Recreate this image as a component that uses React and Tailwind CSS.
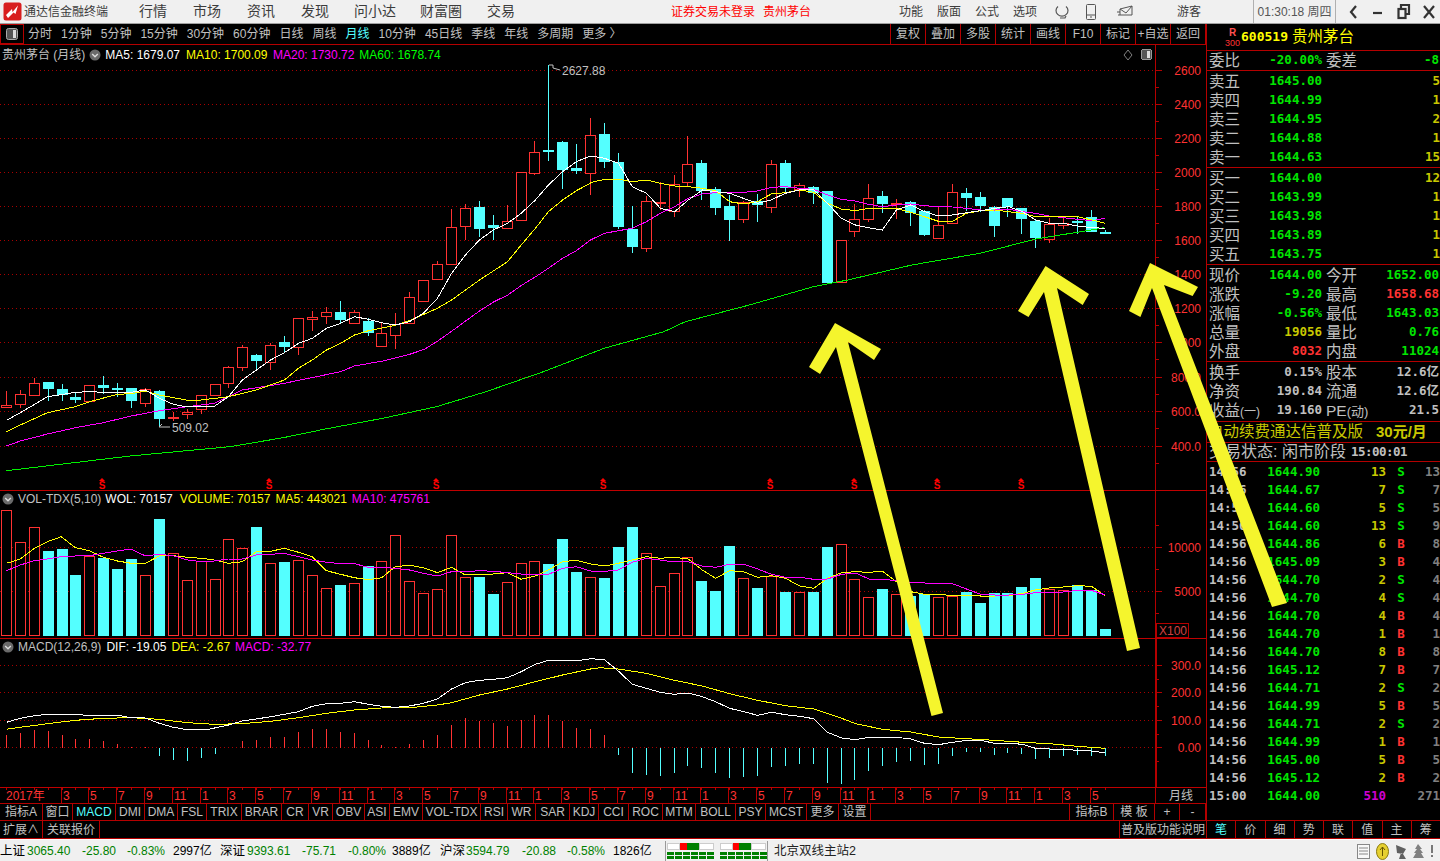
import React from "react";

const RED = "#ff3232", CY = "#54ffff", GRID = "#a80000", AX = "#b40000";
const cx = (i) => Math.round(5.9 + 13.91 * i);
const ry7 = (z) => 60 + z / 3;
const ry9 = (z) => 485 + z / 3;
const x7 = (z) => z / 2.613;
const x8 = (z) => 540 + z / 2.34;
const x10 = (z) => 600 + z / 2.57;

const C = [
  ["r",992,1036,1042,1042],["r",990,1003,1033,1045],["r",953,970,1004,1004],["c",966,966,986,1022],["c",972,988,1006,1022],
  ["c",995,1011,1019,1028],["r",976,976,1022,1022],["c",948,975,984,1002],["c",968,984,987,1010],["c",984,984,1022,1044],
  ["r",984,986,1028,1040],["c",990,993,1076,1100],["f",1055,1070,1076,1084],["r",1048,1056,1061,1076],["r",1006,1006,1048,1062],
  ["r",972,973,1004,1006],["r",918,922,970,984],["r",855,862,920,932],["c",882,885,902,926],["r",850,856,905,930],
  ["c",828,846,860,880],["r",775,775,860,885],["r",753,772,778,812],["r",742,757,769,792],["c",723,756,780,792],
  ["r",750,755,788,788],["c",775,783,818,828],["r",790,820,857,858],["r",760,792,824,866],["r",696,712,790,792],
  ["r",660,661,722,722],["r",603,613,656,656],["r",447,502,611,611],["r",432,445,497,540],["c",423,441,506,530],
  ["c",465,495,503,540],["r",435,484,503,503],["r",337,337,479,479],["r",243,277,338,344],["c",14,270,272,303],
  ["c",244,246,330,387],["c",252,323,333,342],["r",174,226,338,405],["c",189,222,306,323],["c",280,306,500,507],
  ["c",438,507,560,578],["r",408,424,563,575],["r",365,426,429,450],["r",345,373,453,470],["r",228,313,365,378],
  ["c",300,310,392,420],["c",382,388,443,465],["c",405,438,480,542],["r",423,425,476,488],["c",402,423,435,485],
  ["r",300,313,440,458],["c",300,310,385,400],["r",368,376,388,412],["c",378,381,400,432],["c",393,393,668,672],
  ["r",541,541,665,665],["r",432,478,512,530],["r",372,415,476,485],["c",393,409,432,458],["f",418,430,436,476],
  ["c",424,427,459,498],["c",451,453,525,528],["r",440,496,533,533],["r",372,397,490,492],["c",385,400,414,452],
  ["c",396,411,438,457],["c",438,441,497,530],["c",414,414,442,470],["c",444,445,476,522],["c",478,484,535,564],
  ["r",473,493,538,548],["r",472,488,496,506],["c",472,483,486,521],["c",451,472,516,516],["c",510,516,518,522],
];

const p7 = (a) => a.map(([x, y]) => [x7(x), ry7(y)]);
const p8 = (a) => a.map(([x, y]) => [x8(x), ry7(y)]);
const p9 = (a) => a.map(([x, y]) => [x7(x), ry9(y)]);
const p10 = (a) => a.map(([x, y]) => [x10(x), ry9(y)]);
const pts = (a) => a.map(([x, y]) => `${x.toFixed(1)},${y.toFixed(1)}`).join(" ");

const MA5 = [...p7([[17,1081],[53,1058],[124,1010],[160,1004],[197,997],[234,995],[270,997],[343,997],[380,990],[416,1015],[453,1033],[490,1041],[560,1039],[597,1010],[633,960],[670,930],[707,900],[743,878],[780,850],[816,835],[853,805],[890,790],[926,770],[963,778],[997,788],[1033,795],[1070,785],[1106,760],[1143,715],[1180,640],[1216,585],[1253,540],[1289,510],[1326,490],[1362,460],[1399,420],[1433,375],[1470,335],[1506,305],[1543,288]]),
  ...p8([[118,288],[151,295],[184,310],[216,380],[249,400],[282,445],[315,455],[347,420],[380,390],[411,395],[444,400],[476,415],[509,430],[541,420],[574,400],[607,390],[640,388],[673,430],[705,475],[738,495],[769,503],[801,510],[834,450],[867,435],[900,455],[932,468],[965,465],[998,458],[1031,452],[1064,445],[1097,440],[1129,455],[1160,480],[1192,490],[1225,490],[1258,498],[1291,503],[1323,505]])];
const MA10 = [...p7([[17,1115],[53,1095],[124,1058],[197,1040],[234,1025],[307,1003],[343,1001],[380,993],[416,1005],[490,1021],[526,1020],[597,1010],[670,990],[743,960],[780,925],[816,900],[853,870],[890,850],[926,825],[963,812],[1033,796],[1070,782],[1143,745],[1180,720],[1253,660],[1326,605],[1362,555],[1399,505],[1433,455],[1470,420],[1506,392],[1543,370]]),
  ...p8([[118,368],[151,358],[184,358],[216,365],[249,360],[282,370],[315,378],[347,380],[380,385],[411,392],[444,425],[476,432],[509,425],[541,402],[574,398],[607,390],[640,397],[673,430],[705,447],[738,452],[769,445],[801,445],[834,445],[867,457],[900,470],[932,484],[965,484],[998,460],[1031,452],[1064,450],[1097,455],[1129,460],[1160,470],[1192,470],[1225,470],[1258,470],[1291,480],[1323,490]])];
const MA20 = [...p7([[17,1158],[53,1143],[124,1122],[197,1103],[270,1088],[343,1068],[416,1052],[490,1040],[560,1030],[633,990],[743,970],[890,935],[926,918],[1000,903],[1036,893],[1073,882],[1109,868],[1145,842],[1182,812],[1218,782],[1254,752],[1291,725],[1327,705],[1364,675],[1400,650],[1433,625],[1470,595],[1506,572]]),
  ...p8([[118,540],[151,520],[184,512],[216,505],[249,485],[282,460],[315,440],[347,415],[380,402],[411,398],[444,397],[476,397],[509,393],[541,382],[574,380],[607,385],[640,388],[673,405],[705,418],[738,423],[769,433],[801,440],[834,435],[867,432],[900,437],[932,440],[965,441],[998,445],[1031,450],[1064,450],[1097,448],[1129,455],[1160,460],[1192,468],[1225,473],[1258,478],[1291,482],[1323,475]])];
const MA60 = [...p7([[17,1232],[340,1188],[600,1160],[740,1133],[850,1107],[1000,1075],[1140,1040],[1270,995],[1420,935]]),
  ...p8([[140,870],[150,865],[290,815],[340,785],[490,735],[640,680],[720,660],[870,615],[1030,580],[1160,537],[1290,510],[1320,503]])];

const V = ["r76","r172","r127","c198","c192","c270","r213","c219","c252","c222","r271","c102","r205","r286","r229","r283","r163","r189","c126","r235","c231","r226","r271","r310","c300","r295","c244","r229","r151","r289","r325","r313","r151","r277","c276","c327","r292","r235","r229","c237","c162","c261","r277",
  "c279","c186","c126","r205","r304","r265","r217","c288","c318","c183","r280","c309","r272","c321","r322","c321","c186","r178","r283","r337","c312","r328","c333","c327","r337","r334","c321","c354","c324","c324","c306","c279","r312","r316","c300","c316","c432"];

const VY = [...p9([[17,235],[53,222],[90,190],[124,170],[160,155],[197,188],[234,197],[270,217],[307,228],[343,235],[380,235],[416,213],[453,212],[490,217],[526,220],[560,225],[597,235],[633,230],[670,200],[707,199],[743,190],[780,202],[816,215],[853,257],[890,268],[926,278],[963,284],[997,278],[1033,245],[1070,241],[1106,248],[1143,263],[1180,247],[1216,270],[1253,268],[1289,267],[1326,263],[1362,283],[1399,273],[1433,255],[1470,230],[1506,226],[1543,237]]),
  ...p10([[12,243],[47,235],[83,225],[119,215],[155,220],[191,217],[227,222],[263,255],[297,280],[333,257],[369,260],[405,277],[441,272],[477,280],[513,303],[549,310],[585,280],[621,263],[657,260],[691,262],[726,259],[762,290],[799,320],[834,328],[870,328],[906,332],[942,331],[978,333],[1014,333],[1050,332],[1086,325],[1119,315],[1155,309],[1191,306],[1227,302],[1263,304],[1297,331]])];
const VM = [...p9([[17,257],[53,240],[90,227],[124,222],[160,215],[197,213],[234,212],[270,205],[307,198],[343,192],[380,213],[416,208],[453,212],[490,225],[526,230],[560,228],[597,222],[633,222],[670,210],[707,208],[743,205],[780,215],[816,225],[853,232],[890,236],[926,236],[963,247],[997,247],[1033,250],[1070,255],[1106,265],[1143,273],[1180,260],[1216,260],[1253,257],[1289,259],[1326,263],[1362,267],[1399,270],[1433,268],[1470,250],[1506,245],[1543,258]]),
  ...p10([[12,259],[47,255],[83,232],[119,220],[155,225],[191,231],[227,230],[263,243],[297,247],[333,238],[369,238],[405,252],[441,268],[477,277],[513,277],[549,283],[585,282],[621,268],[657,264],[691,282],[726,283],[762,287],[799,293],[834,294],[870,296],[906,296],[942,312],[978,328],[1014,330],[1050,330],[1086,328],[1119,323],[1155,322],[1191,321],[1227,316],[1263,316],[1297,329]])];

const DIF = [...p9([[17,712],[53,700],[90,692],[124,688],[180,688],[234,691],[307,691],[343,698],[380,699],[416,715],[453,727],[490,734],[540,734],[597,720],[633,708],[670,702],[707,695],[743,688],[780,680],[816,664],[853,656],[890,655],[926,650],[963,658],[997,664],[1033,667],[1070,663],[1106,655],[1143,642],[1180,612],[1216,593],[1253,586],[1289,583],[1326,578],[1362,560],[1399,538],[1433,526],[1470,526],[1506,528],[1543,521]]),
  ...p10([[0,523],[12,525],[47,558],[83,598],[119,610],[155,622],[191,628],[227,624],[263,635],[297,650],[333,670],[369,680],[405,691],[441,682],[477,689],[513,694],[549,701],[585,742],[621,759],[657,764],[691,757],[726,757],[762,757],[799,762],[834,775],[870,779],[906,772],[942,766],[978,766],[1014,775],[1050,775],[1086,778],[1119,790],[1155,792],[1191,793],[1227,796],[1263,798],[1297,803]])];
const DEA = [...p9([[17,733],[53,727],[124,716],[197,706],[270,700],[343,698],[416,703],[490,713],[560,718],[633,716],[707,709],[780,698],[853,685],[926,675],[997,669],[1070,668],[1143,660],[1180,653],[1253,630],[1326,612],[1399,590],[1470,570],[1543,552]]),
  ...p10([[0,548],[47,552],[119,565],[191,586],[263,603],[333,626],[405,646],[477,662],[549,672],[621,700],[657,716],[726,733],[799,741],[870,756],[942,761],[1014,766],[1086,772],[1155,776],[1227,784],[1297,790]])];
const H = [750,745,736,739,751,763,763,769,778,785,786,812,824,828,818,806,790,768,765,757,756,742,733,733,742,745,766,781,785,778,766,751,720,700,707,714,724,706,690,690,708,730,733,750,
  810,864,870,873,864,843,849,864,879,876,873,846,843,837,837,894,897,885,858,843,831,828,840,837,813,801,801,810,804,807,822,819,813,810,813,813];

const Grid = ({ y }) => <line x1="0" x2="1155" y1={y + 0.5} y2={y + 0.5} stroke={GRID} strokeDasharray="1 3" />;
const Line = ({ p, c }) => <polyline points={pts(p)} fill="none" stroke={c} strokeWidth="1" />;
const T = ({ x, y, c = RED, a = "end", s = 12, children, ...r }) => (
  <text x={x} y={y} fill={c} textAnchor={a} fontSize={s} fontFamily="'Liberation Sans','Noto Sans CJK SC',sans-serif" {...r}>{children}</text>
);
const AxisTick = ({ y, major }) => <line x1="1156" x2={major ? 1162 : 1159} y1={y + 0.5} y2={y + 0.5} stroke={AX} />;

function PriceChart() {
  const gy = [31,133,235,337,439,541,643,745,847,951,1054,1157].map((z) => Math.round(ry7(z)));
  const labels = ["2600","2400","2200","2000","1800","1600","1400","1200","1000","800.0","600.0","400.0"];
  const ss = [102, 269, 436, 603, 770, 854, 937, 1021];
  return (
    <svg viewBox="0 45 1206 445" className="block w-full h-full" shapeRendering="crispEdges">
      {gy.map((y) => <Grid key={y} y={y} />)}
      {gy.map((y, i) => (
        <g key={i}>
          <AxisTick y={y} major />
          <AxisTick y={y + 17} />
          <T x="1201" y={y + 5}>{labels[i]}</T>
        </g>
      ))}
      <line x1="1155.5" x2="1155.5" y1="45" y2="490" stroke={AX} />
      {C.map(([k, wt, bt, bb, wb], i) => {
        const x = cx(i);
        const col = k === "c" ? CY : RED;
        const [a, b, c, d] = [wt, bt, bb, wb].map((z) => Math.round(ry7(z)));
        return (
          <g key={i}>
            <line x1={x + 0.5} x2={x + 0.5} y1={a} y2={d} stroke={col} />
            {k === "r" ? (
              <rect x={x - 5 + 0.5} y={b + 0.5} width="10" height={Math.max(c - b, 1)} fill="#000" stroke={col} />
            ) : (
              <rect x={x - 5} y={b} width="11" height={Math.max(c - b, 2)} fill={col} />
            )}
          </g>
        );
      })}
      <Line p={MA60} c="#00f000" />
      <Line p={MA20} c="#ff00ff" />
      <Line p={MA10} c="#ffff00" />
      <Line p={MA5} c="#ffffff" />
      {ss.map((x) => (
        <g key={x} shapeRendering="auto">
          <polygon points={`${x},478 ${x - 3},481 ${x + 3},481`} fill="#ff0000" />
          <T x={x} y="488.5" a="middle" s="10" c="#ff0000" fontWeight="700">S</T>
        </g>
      ))}
      <g shapeRendering="auto">
        <polyline points="549,65 553,65 553,68 560,70" fill="none" stroke="#c0c0c0" />
        <T x="562" y="75" a="start" c="#c0c0c0">2627.88</T>
        <polyline points="170,427 159,427 162,424 M159,427" fill="none" stroke="#c0c0c0" />
        <T x="172" y="432" a="start" c="#c0c0c0">509.02</T>
        <polygon points="1128,50 1132,55 1128,60 1124,55" fill="none" stroke="#808080" />
      </g>
      <rect x="1141.5" y="49.5" width="10" height="10" rx="2" fill="#555" stroke="#999" />
      <rect x="1147" y="51" width="3" height="7" fill="#ddd" />
    </svg>
  );
}

function VolChart() {
  return (
    <svg viewBox="0 491 1206 147" className="block w-full h-full" shapeRendering="crispEdges">
      <Grid y={547} />
      <Grid y={591} />
      <line x1="1155.5" x2="1155.5" y1="491" y2="638" stroke={AX} />
      {[547, 591].map((y) => <AxisTick key={y} y={y} major />)}
      {[525, 569, 613].map((y) => <AxisTick key={y} y={y} />)}
      <T x="1201" y="552">10000</T>
      <T x="1201" y="596">5000</T>
      <rect x="1156.5" y="623.5" width="32" height="14" fill="none" stroke={AX} />
      <T x="1159" y="635" a="start" c="#d04040">X100</T>
      {V.map((v, i) => {
        const k = v[0];
        const top = Math.round(ry9(+v.slice(1)));
        const x = cx(i);
        return k === "c" ? (
          <rect key={i} x={x - 5} y={top} width="11" height={636 - top} fill={CY} />
        ) : (
          <rect key={i} x={x - 5 + 0.5} y={top + 0.5} width="10" height={636 - top - 1} fill="#000" stroke={RED} />
        );
      })}
      <Line p={VY} c="#ffff00" />
      <Line p={VM} c="#ff00ff" />
    </svg>
  );
}

function MacdChart() {
  const rows = [[665, "300.0"], [692, "200.0"], [720, "100.0"], [747, "0.00"]];
  return (
    <svg viewBox="0 639 1206 148" className="block w-full h-full" shapeRendering="crispEdges">
      {rows.map(([y]) => <Grid key={y} y={y} />)}
      {H.map((z, i) => {
        const y = Math.round(ry9(z));
        const x = cx(i) + 0.5;
        return <line key={i} x1={x} x2={x} y1={y} y2={748} stroke={z < 788 ? RED : CY} />;
      })}
      <Line p={DEA} c="#ffff00" />
      <Line p={DIF} c="#ffffff" />
      <rect x="1155" y="639" width="2" height="148" fill={AX} />
      {rows.map(([y, t]) => (
        <g key={y}>
          <AxisTick y={y} major />
          <AxisTick y={y + 14} />
          <T x="1201" y={y + 5}>{t}</T>
        </g>
      ))}
    </svg>
  );
}

function DateRow() {
  const months = [3, 5, 7, 9, 11, 1];
  const ticks = [];
  for (let i = 4; i <= 78; i += 2) ticks.push(i);
  return (
    <svg viewBox="0 788 1206 15" className="block w-full h-full" shapeRendering="crispEdges">
      {C.map((_, i) => <line key={i} x1={cx(i) + 0.5} x2={cx(i) + 0.5} y1="788" y2="790" stroke={AX} />)}
      <T x="6" y="800" a="start">2017年</T>
      {ticks.map((i, k) => (
        <g key={i}>
          <line x1={cx(i) - 0.5} x2={cx(i) - 0.5} y1="788" y2="803" stroke={AX} />
          <T x={cx(i) + 1} y="800" a="start">{months[k % 6]}</T>
        </g>
      ))}
      <line x1="1155.5" x2="1155.5" y1="788" y2="803" stroke={AX} />
      <T x="1181" y="800" a="middle" c="#c0c0c0">月线</T>
    </svg>
  );
}

const Chev = () => (
  <svg width="12" height="12" viewBox="0 0 12 12" className="shrink-0">
    <circle cx="6" cy="6" r="5.5" fill="#6a6a6a" />
    <path d="M3.2 5l2.8 2.8L8.8 5" fill="none" stroke="#ddd" strokeWidth="1.4" />
  </svg>
);

const Sep = "h-full flex items-center justify-center border-r border-[#b40000] shrink-0";

function Toolbar() {
  const items = ["分时","1分钟","5分钟","15分钟","30分钟","60分钟","日线","周线","月线","10分钟","45日线","季线","年线","多周期","更多 〉"];
  const right = ["复权","叠加","多股","统计","画线","F10","标记","+自选","返回"];
  return (
    <div className="h-[21px] flex border-b border-[#b40000] text-[12px] text-[#c0c0c0] shrink-0">
      <div className="w-[24px] h-full border border-[#b40000] flex items-center justify-center">
        <svg width="14" height="14" viewBox="0 0 14 14"><rect x="1.5" y="1.5" width="11" height="11" rx="2" fill="#555" stroke="#aaa" /><rect x="8" y="3" width="3" height="8" fill="#ddd" /></svg>
      </div>
      <div className="flex items-center gap-[9px] ml-[4px]">
        {items.map((t) => <span key={t} className={t === "月线" ? "text-[#54ffff]" : ""}>{t}</span>)}
      </div>
      <div className="flex ml-auto h-full border-l border-[#b40000]">
        {right.map((t) => <div key={t} className={`w-[35px] ${Sep}`}>{t}</div>)}
      </div>
    </div>
  );
}

function Tabs() {
  const cell = "h-full flex items-center justify-center border-r border-[#b40000] text-[12px] shrink-0";
  return (
    <div className="h-[17px] flex border-b border-[#b40000] text-[#c0c0c0] shrink-0">
      <div className={`${cell} w-[43px]`}>指标A</div>
      <div className={`${cell} w-[30px]`}>窗口</div>
      <div className={`${cell} w-[43px] text-[#54ffff]`}>MACD</div>
      <div className={`${cell} w-[29px]`}>DMI</div>
      <div className={`${cell} w-[33px]`}>DMA</div>
      <div className={`${cell} w-[29px]`}>FSL</div>
      <div className={`${cell} w-[35px]`}>TRIX</div>
      <div className={`${cell} w-[40px]`}>BRAR</div>
      <div className={`${cell} w-[27px]`}>CR</div>
      <div className={`${cell} w-[24px]`}>VR</div>
      <div className={`${cell} w-[32px]`}>OBV</div>
      <div className={`${cell} w-[25px]`}>ASI</div>
      <div className={`${cell} w-[33px]`}>EMV</div>
      <div className={`${cell} w-[58px]`}>VOL-TDX</div>
      <div className={`${cell} w-[27px]`}>RSI</div>
      <div className={`${cell} w-[28px]`}>WR</div>
      <div className={`${cell} w-[34px]`}>SAR</div>
      <div className={`${cell} w-[29px]`}>KDJ</div>
      <div className={`${cell} w-[30px]`}>CCI</div>
      <div className={`${cell} w-[34px]`}>ROC</div>
      <div className={`${cell} w-[33px]`}>MTM</div>
      <div className={`${cell} w-[40px]`}>BOLL</div>
      <div className={`${cell} w-[30px]`}>PSY</div>
      <div className={`${cell} w-[41px]`}>MCST</div>
      <div className={`${cell} w-[32px]`}>更多</div>
      <div className={`${cell} w-[32px]`}>设置</div>
      <div className="w-[199px] h-full border-r border-[#b40000] shrink-0" />
      <div className={`${cell} w-[44px]`}>指标B</div>
      <div className={`${cell} w-[41px]`}>模 板</div>
      <div className={`${cell} w-[25px]`}>+</div>
      <div className={`${cell} w-[26px]`}>-</div>
    </div>
  );
}

const num = "[font-family:'DejaVu_Sans_Mono','Noto_Sans_CJK_SC',monospace] font-bold text-[12.5px]";
const G = "text-[#00e600]", Y = "text-[#c8c800]", R = "text-[#ff3232]", W = "text-[#c0c0c0]";

function Row4({ l1, v1, c1, l2, v2, c2 }) {
  return (
    <div className="h-[19px] flex items-center pl-[2px] shrink-0">
      <span className="w-[44px] shrink-0 text-[15.5px] text-[#c0c0c0] whitespace-nowrap">{l1}</span>
      <span className={`w-[69px] shrink-0 text-right ${num} ${c1}`}>{v1}</span>
      <span className="w-[44px] shrink-0 ml-[4px] text-[15.5px] text-[#c0c0c0] whitespace-nowrap">{l2}</span>
      <span className={`w-[69px] shrink-0 text-right ${num} ${c2}`}>{v2}</span>
    </div>
  );
}
function Quote({ l, p, v }) {
  return (
    <div className="h-[19px] flex items-center pl-[2px] shrink-0">
      <span className="w-[44px] text-[15.5px] text-[#c0c0c0]">{l}</span>
      <span className={`w-[69px] text-right ${num} ${G}`}>{p}</span>
      <span className={`flex-1 text-right ${num} ${Y}`}>{v}</span>
    </div>
  );
}

const TICKS = [
  ["14:56","1644.90","13","S","13"],["14:56","1644.67","7","S","7"],["14:56","1644.60","5","S","5"],["14:56","1644.60","13","S","9"],
  ["14:56","1644.86","6","B","8"],["14:56","1645.09","3","B","4"],["14:56","1644.70","2","S","4"],["14:56","1644.70","4","S","4"],
  ["14:56","1644.70","4","B","4"],["14:56","1644.70","1","B","1"],["14:56","1644.70","8","B","8"],["14:56","1645.12","7","B","7"],
  ["14:56","1644.71","2","S","2"],["14:56","1644.99","5","B","5"],["14:56","1644.71","2","S","2"],["14:56","1644.99","1","B","1"],
  ["14:56","1645.00","5","B","5"],["14:56","1645.12","2","B","2"],["15:00","1644.00","510","","271"],
];

function RightPanel() {
  const line = "border-b border-[#b40000]";
  const tabs = ["笔","价","细","势","联","值","主","筹"];
  return (
    <div className="w-[234px] h-full flex flex-col border-l border-[#b40000] shrink-0 overflow-hidden">
      <div className={`h-[27px] flex items-center ${line} shrink-0`}>
        <div className="w-[15px] ml-[18px] flex flex-col items-center pt-[2px]">
          <span className="text-[10px] font-bold text-[#ff5050] leading-[10px]">R</span>
          <span className="text-[9px] text-[#ff3232] leading-[10px]">300</span>
        </div>
        <span className="ml-[1px] text-[#ffff00] font-bold text-[13px] [font-family:'DejaVu_Sans_Mono',monospace]">600519</span>
        <span className="ml-[4px] text-[#ffff00] text-[15.5px]">贵州茅台</span>
      </div>
      <div className={`h-[20px] shrink-0 ${line}`}><Row4 l1="委比" v1="-20.00%" c1={G} l2="委差" v2="-8" c2={G} /></div>
      <div className={`h-[97px] pt-[1px] shrink-0 ${line}`}>
        <Quote l="卖五" p="1645.00" v="5" /><Quote l="卖四" p="1644.99" v="1" /><Quote l="卖三" p="1644.95" v="2" /><Quote l="卖二" p="1644.88" v="1" /><Quote l="卖一" p="1644.63" v="15" />
      </div>
      <div className={`h-[97px] pt-[1px] shrink-0 ${line}`}>
        <Quote l="买一" p="1644.00" v="12" /><Quote l="买二" p="1643.99" v="1" /><Quote l="买三" p="1643.98" v="1" /><Quote l="买四" p="1643.89" v="1" /><Quote l="买五" p="1643.75" v="1" />
      </div>
      <div className={`h-[97px] pt-[1px] shrink-0 ${line}`}>
        <Row4 l1="现价" v1="1644.00" c1={G} l2="今开" v2="1652.00" c2={G} />
        <Row4 l1="涨跌" v1="-9.20" c1={G} l2="最高" v2="1658.68" c2={R} />
        <Row4 l1="涨幅" v1="-0.56%" c1={G} l2="最低" v2="1643.03" c2={G} />
        <Row4 l1="总量" v1="19056" c1={Y} l2="量比" v2="0.76" c2={G} />
        <Row4 l1="外盘" v1="8032" c1={R} l2="内盘" v2="11024" c2={G} />
      </div>
      <div className={`h-[60px] pt-[1px] shrink-0 ${line}`}>
        <Row4 l1="换手" v1="0.15%" c1={W} l2="股本" v2="12.6亿" c2={W} />
        <Row4 l1="净资" v1="190.84" c1={W} l2="流通" v2="12.6亿" c2={W} />
        <Row4 l1={<>收益<span className="text-[12px]">(一)</span></>} v1="19.160" c1={W} l2={<>PE<span className="text-[13px]">(动)</span></>} v2="21.5" c2={W} />
      </div>
      <div className={`h-[21px] flex items-center pl-[1px] shrink-0 ${line} text-[#c8c800] text-[15.5px] whitespace-nowrap`}>
        自动续费通达信普及版<span className="ml-[13px] font-bold text-[15px]">30元/月</span>
      </div>
      <div className={`h-[19px] flex items-center pl-[2px] shrink-0 ${line} text-[#c0c0c0] text-[16px] whitespace-nowrap`}>
        交易状态: 闲市阶段<span className={`ml-[5px] tracking-[-0.5px] ${num}`}>15:00:01</span>
      </div>
      <div className={`flex-1 pt-[1px] ${line}`}>
        {TICKS.map(([t, p, v, s, n], i) => (
          <div key={i} className={`h-[18px] flex items-center pl-[2px] ${num}`}>
            <span className={`w-[40px] ${W}`}>{t}</span>
            <span className={`w-[71px] text-right ${G}`}>{p}</span>
            <span className={`w-[66px] text-right ${v === "510" ? "text-[#d000d0]" : Y}`}>{v}</span>
            <span className={`w-[18px] ml-[6px] text-center ${s === "S" ? G : R}`}>{s}</span>
            <span className="flex-1 text-right text-[#808080]">{n}</span>
          </div>
        ))}
      </div>
      <div className="h-[18px] flex shrink-0 border-b border-[#b40000] text-[12px] text-[#c0c0c0]">
        {tabs.map((t, i) => (
          <div key={t} className={`flex-1 flex items-center justify-center ${i < 7 ? "border-r border-[#b40000]" : ""} ${i === 0 ? "text-[#54ffff]" : ""}`}>{t}</div>
        ))}
      </div>
    </div>
  );
}

function TopBar() {
  return (
    <div className="h-[24px] flex items-center bg-[#f0f0f0] border-b border-[#a0a0a0] text-[#3c3c3c] shrink-0 whitespace-nowrap">
      <svg width="20" height="20" viewBox="0 0 20 20" className="ml-[3px] shrink-0">
        <rect x="0.5" y="0.5" width="18" height="18" rx="2.5" fill="#d81e1e" />
        <path d="M3 13 L9 7 L9.5 10 L15 3.5 L12.5 12 L10.5 10.5 L5 16 Z" fill="#fff" />
      </svg>
      <span className="ml-[1px] text-[12px]">通达信金融终端</span>
      <div className="ml-[31px] flex text-[14px]">
        <span>行情</span>
        <span className="ml-[26px]">市场</span>
        <span className="ml-[26px]">资讯</span>
        <span className="ml-[26px]">发现</span>
        <span className="ml-[25px]">问小达</span>
        <span className="ml-[24px]">财富圈</span>
        <span className="ml-[25px]">交易</span>
      </div>
      <span className="ml-[156px] text-[12px] text-[#ff0000]">证券交易未登录</span>
      <span className="ml-[8px] text-[12px] text-[#ff0000]">贵州茅台</span>
      <div className="ml-[88px] flex gap-[14px] text-[12px]">
        {["功能","版面","公式","选项"].map((t) => <span key={t}>{t}</span>)}
      </div>
      <svg width="16" height="16" viewBox="0 0 16 16" className="ml-[17px] shrink-0" fill="none" stroke="#555" strokeWidth="1.2">
        <path d="M4 2.5a6 5.5 0 1 0 8 0" />
        <path d="M6 14h5l1-2" />
      </svg>
      <svg width="12" height="16" viewBox="0 0 12 16" className="ml-[15px] shrink-0" fill="none" stroke="#555">
        <rect x="1.5" y="0.5" width="9" height="15" rx="1" />
        <path d="M2 11h8M5 13h2" />
      </svg>
      <svg width="16" height="14" viewBox="0 0 16 14" className="ml-[20px] shrink-0" fill="none" stroke="#555">
        <path d="M3 4l12-3v9H3z" />
        <path d="M3 4l6 4 6-7M0 7h3M1 10h2" />
      </svg>
      <span className="ml-[44px] text-[12px]">游客</span>
      <div className="ml-[52px] w-[83px] h-[23px] flex items-center justify-center border-x border-[#b0b0b0] text-[12px] text-[#555]">01:30:18 周四</div>
      <svg width="104" height="20" viewBox="0 0 104 20" className="shrink-0" fill="none" stroke="#333" strokeWidth="2.2">
        <path d="M20 4l-5 6 5 6" />
        <path d="M37 11h9" />
        <rect x="62.5" y="7" width="7" height="9" />
        <path d="M65 6V3h8v9h-3" />
        <path d="M88 4l10 12M98 4L88 16" />
      </svg>
    </div>
  );
}

function StatusBar() {
  const g = "text-[#008000]";
  return (
    <div className="h-[22px] flex items-center bg-[#f0f0f0] text-[12px] text-[#000] shrink-0 whitespace-nowrap border-t border-white pt-[1px]">
      <span className="w-[27px] text-[12.5px]">上证</span>
      <span className={`w-[55px] ${g}`}>3065.40</span>
      <span className={`w-[45px] ${g}`}>-25.80</span>
      <span className={`w-[46px] ${g}`}>-0.83%</span>
      <span className="w-[47px]">2997亿</span>
      <span className="w-[27px] text-[12.5px]">深证</span>
      <span className={`w-[55px] ${g}`}>9393.61</span>
      <span className={`w-[46px] ${g}`}>-75.71</span>
      <span className={`w-[44px] ${g}`}>-0.80%</span>
      <span className="w-[48px]">3889亿</span>
      <span className="w-[26px] text-[12.5px]">沪深</span>
      <span className={`w-[56px] ${g}`}>3594.79</span>
      <span className={`w-[45px] ${g}`}>-20.88</span>
      <span className={`w-[46px] ${g}`}>-0.58%</span>
      <span className="w-[52px]">1826亿</span>
      <svg width="104" height="20" viewBox="0 0 104 20" className="shrink-0" shapeRendering="crispEdges">
        <rect x="0" y="0" width="1" height="20" fill="#999" />
        <rect x="102" y="0" width="1" height="20" fill="#999" />
        <g fill="#fff" stroke="#ccc"><rect x="2.5" y="2.5" width="12" height="6" /><rect x="34.5" y="2.5" width="14" height="6" /><rect x="55.5" y="2.5" width="12" height="6" /><rect x="86.5" y="2.5" width="14" height="6" /></g>
        <rect x="15" y="2" width="7" height="7" fill="#ff0000" />
        <rect x="22" y="2" width="12" height="7" fill="#008000" />
        <rect x="68" y="2" width="6" height="7" fill="#ff0000" />
        <rect x="74" y="2" width="12" height="7" fill="#008000" />
        {[0, 1, 2, 3, 4, 5].map((k) => <rect key={k} x={2 + k * 8} y="11" width="7" height="3" fill="#008000" />)}
        {[0, 1, 2, 3, 4, 5].map((k) => <rect key={k} x={2 + k * 8} y="15" width="7" height="3" fill="#008000" />)}
        {[0, 1, 2, 3, 4, 5].map((k) => <rect key={k} x={55 + k * 8} y="11" width="7" height="3" fill="#008000" />)}
        {[0, 1, 2, 3, 4, 5].map((k) => <rect key={k} x={55 + k * 8} y="15" width="7" height="3" fill="#008000" />)}
      </svg>
      <span className="ml-[5px] text-[12.5px] text-[#222]">北京双线主站2</span>
      <svg width="84" height="18" viewBox="0 0 84 18" className="ml-auto shrink-0">
        <g fill="none" stroke="#888"><rect x="1.5" y="2.5" width="12" height="14" fill="#f8f8f8" /><path d="M3 6h9M3 9h9M3 12h9" /></g>
        <ellipse cx="26.5" cy="9.5" rx="6" ry="8" fill="#e6d030" stroke="#8a7a10" />
        <path d="M26.5 5v9M24 8l2.5-3 2.5 3" fill="none" stroke="#665500" />
        <path d="M40 3l10 4-3 5-6-1zM45 11l-2 6h7l-3-5" fill="#606060" />
        <path d="M62 2l4 5h-2l3 4h-2l3 5h-11l3-5h-2l3-4h-2z" fill="#808080" />
        <rect x="75" y="3" width="2" height="8" fill="#777" />
        <rect x="75" y="13" width="2" height="2" fill="#777" />
      </svg>
    </div>
  );
}

export default function App() {
  return (
    <div className="relative w-[1440px] h-[861px] flex flex-col bg-black overflow-hidden [font-family:'Liberation_Sans','Noto_Sans_CJK_SC',sans-serif]">
      <TopBar />
      <div className="flex-1 flex min-h-0">
        <div className="w-[1206px] h-full flex flex-col shrink-0">
          <Toolbar />
          <div className="relative h-[446px] border-b border-[#c00000] shrink-0">
            <div className="absolute top-[1px] left-[2px] flex items-center gap-[4px] text-[12px] whitespace-nowrap">
              <span className="text-[#c0c0c0]">贵州茅台 (月线)</span>
              <Chev />
              <span className="text-[#ffffff]">MA5: 1679.07</span>
              <span className="ml-[2px] text-[#ffff00]">MA10: 1700.09</span>
              <span className="ml-[1.5px] text-[#ff00ff]">MA20: 1730.72</span>
              <span className="ml-[1px] text-[#00ff00]">MA60: 1678.74</span>
            </div>
            <PriceChart />
          </div>
          <div className="relative h-[148px] border-b border-[#c00000] shrink-0">
            <div className="absolute -top-px left-[2px] flex items-center text-[12px] whitespace-nowrap">
              <Chev />
              <span className="ml-[4px] text-[#c0c0c0]">VOL-TDX(5,10)</span>
              <span className="ml-[4px] text-[#ffffff]">WOL: 70157</span>
              <span className="ml-[7px] text-[#ffff00]">VOLUME: 70157</span>
              <span className="ml-[5px] text-[#ffff00]">MA5: 443021</span>
              <span className="ml-[5px] text-[#ff00ff]">MA10: 475761</span>
            </div>
            <VolChart />
          </div>
          <div className="relative h-[149px] border-b border-[#c00000] shrink-0">
            <div className="absolute -top-px left-[2px] flex items-center text-[12px] whitespace-nowrap">
              <Chev />
              <span className="ml-[4px] text-[#c0c0c0]">MACD(12,26,9)</span>
              <span className="ml-[5px] text-[#ffffff]">DIF: -19.05</span>
              <span className="ml-[5px] text-[#ffff00]">DEA: -2.67</span>
              <span className="ml-[5px] text-[#ff00ff]">MACD: -32.77</span>
            </div>
            <MacdChart />
          </div>
          <div className="h-[16px] border-b border-[#b40000] shrink-0"><DateRow /></div>
          <Tabs />
          <div className="h-[18px] flex border-b border-[#b40000] text-[12px] text-[#c0c0c0] shrink-0">
            <div className={`w-[43px] ${Sep}`}>扩展∧</div>
            <div className={`w-[57px] ${Sep}`}>关联报价</div>
            <div className="flex-1" />
            <div className="w-[87px] h-full flex items-center justify-center border-l border-[#b40000] whitespace-nowrap">普及版功能说明</div>
          </div>
        </div>
        <RightPanel />
      </div>
      <StatusBar />
      <svg viewBox="0 0 1440 861" className="absolute inset-0 w-[1440px] h-[861px] pointer-events-none">
        <g fill="#f5f52d">
          <polygon points="835,323 881,349 874,360 848,342 943,713 931.5,716 836,347 820,374 809,367" />
          <polygon points="1045.5,266 1089,294 1082.7,305 1057,288 1140,648 1127,651 1044,292 1028.5,317 1018,311" />
          <polygon points="1150,263 1198,287 1192.6,296 1164,285 1287,603 1272,607 1152,288 1140.4,317 1129,311" />
        </g>
      </svg>
    </div>
  );
}
